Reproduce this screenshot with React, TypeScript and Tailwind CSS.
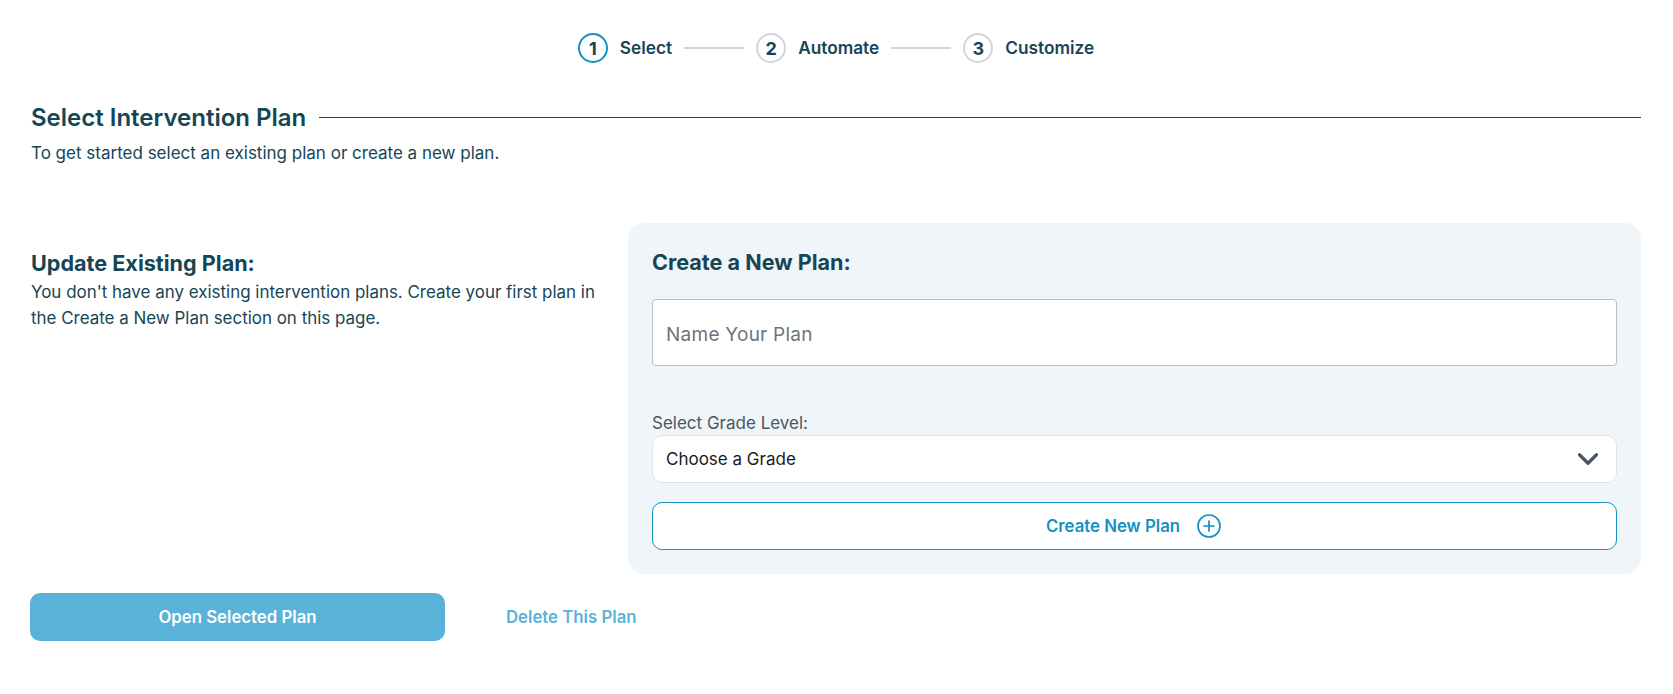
import React from 'react';
import { ChevronDown } from 'lucide-react';

const steps = [
  { n: 1, label: 'Select', active: true },
  { n: 2, label: 'Automate', active: false },
  { n: 3, label: 'Customize', active: false },
];

function Stepper() {
  return (
    <div className="flex items-center justify-center h-[30px] pr-[1px]">
      {steps.map((step, i) => (
        <React.Fragment key={step.n}>
          {i > 0 && <div className="w-[60px] h-[2px] bg-[#d1d5db] mx-[12px]" />}
          <div
            className={`size-[30px] rounded-full border-2 flex items-center justify-center text-[18px] font-bold ${
              step.active ? 'border-[#1391c0]' : 'border-[#d1d5db]'
            }`}
          >
            {step.n}
          </div>
          <span className="ml-[12px] text-[17.25px] font-semibold">{step.label}</span>
        </React.Fragment>
      ))}
    </div>
  );
}

export default function App() {
  return (
    <div className="min-h-[694px] bg-white text-[#164555] pt-[33px] px-[32px] font-['Inter',sans-serif]">
      <Stepper />

      <div className="flex items-center h-[34px] mt-[37px]">
        <h1 className="pt-[2px] text-[24px] leading-[34px] font-semibold whitespace-nowrap -ml-[1px]">
          Select Intervention Plan
        </h1>
        <div className="flex-1 h-[1px] bg-[#164555] ml-[13px]" />
      </div>
      <p className="text-[17px] leading-[24px] mt-[7px] -ml-[1px]">
        To get started select an existing plan or create a new plan.
      </p>

      <div className="flex mt-[58px]">
        <div className="w-[597px] shrink-0 pt-[27px] -ml-[1px]">
          <h2 className="text-[21.6px] leading-[26px] font-bold">Update Existing Plan:</h2>
          <p className="text-[16.95px] leading-[26px] mt-[3px] w-[575px]">
            You don't have any existing intervention plans. Create your first plan in the Create a New Plan section on this page.
          </p>
        </div>

        <div className="flex-1 bg-[#f0f5f9] rounded-[16px] px-[24px] pt-[26px] pb-[24px]">
          <h2 className="text-[21.6px] leading-[26px] font-bold">Create a New Plan:</h2>
          <input
            placeholder="Name Your Plan"
            className="block w-full h-[67px] mt-[24px] pt-[3px] px-[13px] bg-white border border-[#b9bdc4] rounded-[4px] text-[19px] tracking-[0.25px] placeholder:text-[#6f7479] outline-none"
          />
          <div className="text-[17px] leading-[24px] text-[#4b5563] mt-[45px]">Select Grade Level:</div>
          <div className="flex items-center justify-between h-[48px] px-[13px] bg-white border border-[#dde5ea] rounded-[10px] text-[17px] text-[#1a1a1a]">
            <span className="pt-[1px]">Choose a Grade</span>
            <ChevronDown className="size-[34px] text-[#4b5563] -mr-[2px]" strokeWidth={2.25} />
          </div>
          <button className="flex items-center justify-center gap-[17px] w-full h-[48px] mt-[19px] pr-[2px] bg-white border border-[#1391c0] rounded-[10px] text-[16.8px] font-semibold text-[#1391c0]">
            <span className="pt-[1px]">Create New Plan</span>
            <svg width="24" height="24" viewBox="0 0 24 24" fill="none" stroke="currentColor" strokeWidth="1.7" strokeLinecap="round">
              <circle cx="12" cy="12" r="11" />
              <path d="M12 7v10M7 12h10" />
            </svg>
          </button>
        </div>
      </div>

      <div className="flex items-center mt-[19px] -ml-[2px]">
        <button className="w-[415px] h-[48px] pt-[1px] rounded-[10px] bg-[#59b2d8] text-white text-[16.8px] font-semibold">
          Open Selected Plan
        </button>
        <button className="ml-[61px] pt-[1px] text-[16.8px] font-semibold text-[#59b2d8]">Delete This Plan</button>
      </div>
    </div>
  );
}
